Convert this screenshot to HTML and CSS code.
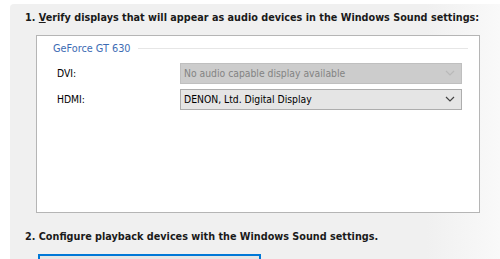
FILE: index.html
```html
<!DOCTYPE html>
<html lang="en">
<head>
    <meta charset="UTF-8">
    <title>Set up digital audio</title>
    <link rel="stylesheet" href="styles.css">
</head>
<body>
    <div class="panel">
        <h3 class="step">1. <u>V</u>erify displays that will appear as audio devices in the Windows Sound settings:</h3>
        <div class="group">
            <div class="group-title"><span>GeForce GT 630</span></div>
            <div class="row">
                <label>DVI:</label>
                <div class="combo disabled">
                    <span>No audio capable display available</span>
                    <svg width="10" height="6" viewBox="0 0 10 6"><path d="M1 1 L5 5 L9 1" fill="none" stroke="#b9b9b9" stroke-width="1.2"/></svg>
                </div>
            </div>
            <div class="row">
                <label>HDMI:</label>
                <div class="combo">
                    <span>DENON, Ltd. Digital Display</span>
                    <svg width="10" height="6" viewBox="0 0 10 6"><path d="M1 1 L5 5 L9 1" fill="none" stroke="#444" stroke-width="1.2"/></svg>
                </div>
            </div>
        </div>
        <h3 class="step step2">2. Configure playback devices with the Windows Sound settings.</h3>
        <div class="button"></div>
    </div>
</body>
</html>
```

FILE: styles.css
```css
body {
    margin: 0;
    background: #ffffff;
    font-family: "DejaVu Sans Condensed", "DejaVu Sans", sans-serif;
    font-size: 10.3px;
    color: #000;
}
.panel {
    margin: 4px 0 0 10px;
    height: 260px;
    background: linear-gradient(to right, #f0f0f0 85%, #f9f9f9);
    border-top-left-radius: 4px;
    padding-top: 7px;
    overflow: hidden;
}
.step {
    margin: 0 0 0 15px;
    font-size: 10.75px;
    line-height: 14px;
    font-weight: bold;
    color: #1a1a1a;
}
.group {
    margin: 10px 0 0 26px;
    width: 444px;
    height: 178px;
    box-sizing: border-box;
    border: 1px solid #b5b5b5;
    background: #fff;
    padding: 0 17px 0 20px;
}
.group-title {
    display: flex;
    align-items: center;
    height: 24px;
    margin: 0 -6px 0 -4px;
    color: #3d6cb4;
    font-size: 10.8px;
}
.group-title::after {
    content: "";
    flex: 1;
    height: 1px;
    background: #e6e6e6;
    margin-left: 7px;
}
.row {
    display: flex;
    align-items: center;
    height: 26px;
}
label {
    width: 123px;
}
.combo {
    flex: 1;
    height: 21px;
    box-sizing: border-box;
    border: 1px solid #adadad;
    background: #e5e5e5;
    display: flex;
    align-items: center;
    justify-content: space-between;
    padding: 0 6px 0 3px;
}
.combo.disabled {
    background: #cccccc;
    border-color: #bfbfbf;
    color: #838383;
}
.step2 {
    margin-top: 17px;
}
.button {
    margin: 10px 0 0 28px;
    width: 219px;
    height: 20px;
    border: 2px solid #0078d7;
    background: #e5e5e5;
}
```
